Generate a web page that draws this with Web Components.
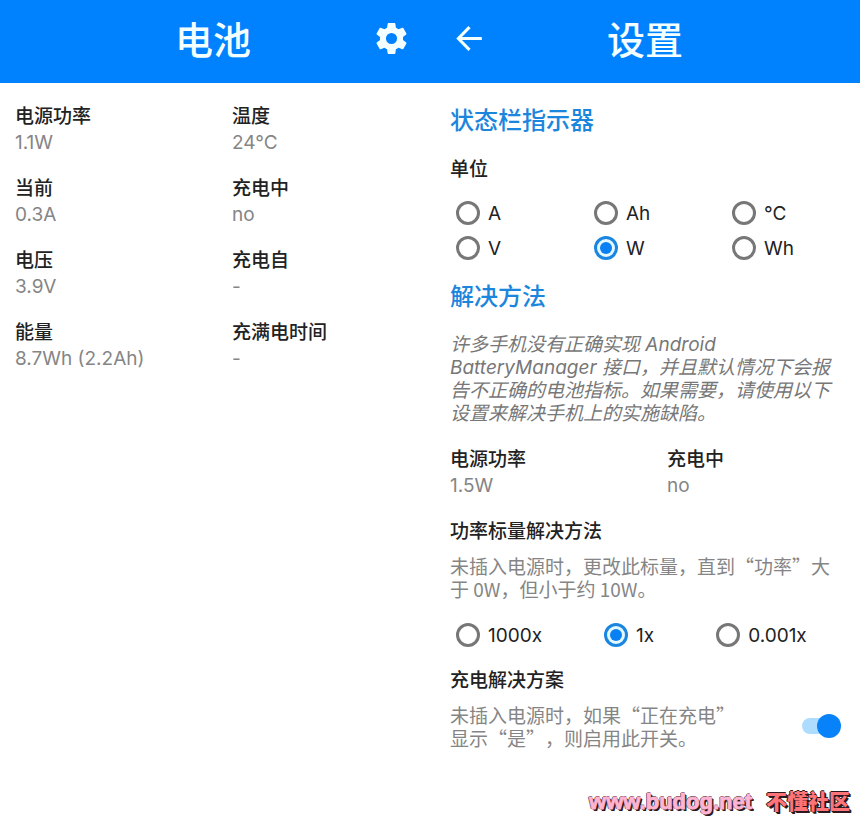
<!DOCTYPE html>
<html lang="zh-CN">
<head>
<meta charset="utf-8">
<meta name="viewport" content="width=device-width, initial-scale=1">
<title>电池</title>
<style>
  body {
    margin: 0;
    min-height: 100vh;
    background: #fff;
    color: #222;
    font-family: Inter, "Noto Sans CJK SC", sans-serif;
    font-size: 19px;
    line-height: 26px;
  }
</style>
</head>
<body>
<battery-app></battery-app>

<script>
class AppHeader extends HTMLElement {
  constructor() {
    super();
    this.attachShadow({ mode: 'open' });
    this.shadowRoot.innerHTML = `
      <style>
        :host { display: block; background: #0082ff; color: #f4ffff; }
        header {
          display: grid;
          grid-template-columns: var(--lead, 48px) 1fr 48px;
          align-items: center;
          box-sizing: border-box;
          height: 83px;
          padding: 0 15px 4px;
        }
        h1 {
          grid-column: 2;
          margin: 0;
          font-size: 38px;
          font-weight: 500;
          line-height: 48px;
          text-align: center;
        }
        ::slotted([slot=end]) { grid-column: 3; }
      </style>
      <header>
        <slot name="start"></slot>
        <h1><slot></slot></h1>
        <slot name="end"></slot>
      </header>
    `;
  }
}
customElements.define('app-header', AppHeader);

const ICONS = {
  gear: '<path fill="currentColor" d="M19.43 12.98c.04-.32.07-.64.07-.98s-.03-.66-.07-.98l2.11-1.65c.19-.15.24-.42.12-.64l-2-3.46c-.12-.22-.39-.3-.61-.22l-2.49 1c-.52-.4-1.08-.73-1.69-.98l-.38-2.65C14.46 2.18 14.25 2 14 2h-4c-.25 0-.46.18-.49.42l-.38 2.65c-.61.25-1.17.59-1.69.98l-2.49-1c-.23-.09-.49 0-.61.22l-2 3.46c-.13.22-.07.49.12.64l2.11 1.65c-.04.32-.07.65-.07.98s.03.66.07.98l-2.11 1.65c-.19.15-.24.42-.12.64l2 3.46c.12.22.39.3.61.22l2.49-1c.52.4 1.08.73 1.69.98l.38 2.65c.03.24.24.42.49.42h4c.25 0 .46-.18.49-.42l.38-2.65c.61-.25 1.17-.59 1.69-.98l2.49 1c.23.09.49 0 .61-.22l2-3.46c.12-.22.07-.49-.12-.64l-2.11-1.65zM12 15.6A3.6 3.6 0 1 1 12 8.4a3.6 3.6 0 0 1 0 7.2z"/>',
  back: '<path fill="none" stroke="currentColor" stroke-width="2" d="M20 12H5.2M12 4.6 4.8 12l7.2 7.4"/>'
};

class IconButton extends HTMLElement {
  connectedCallback() {
    if (this.shadowRoot) return;
    this.attachShadow({ mode: 'open' });
    this.shadowRoot.innerHTML = `
      <style>
        :host { display: block; }
        button {
          display: flex;
          align-items: center;
          justify-content: center;
          width: 48px;
          height: 48px;
          padding: 0 0 2px;
          border: 0;
          background: none;
          color: inherit;
          cursor: pointer;
        }
        svg { width: 37px; height: 37px; }
      </style>
      <button type="button" aria-label="${this.getAttribute('label')}">
        <svg viewBox="0 0 24 24" aria-hidden="true">${ICONS[this.getAttribute('icon')]}</svg>
      </button>
    `;
  }
}
customElements.define('icon-button', IconButton);

class StatItem extends HTMLElement {
  connectedCallback() {
    if (this.shadowRoot) return;
    this.attachShadow({ mode: 'open' });
    this.shadowRoot.innerHTML = `
      <style>
        :host { display: block; }
        .label { font-weight: 500; }
        .value { color: #858585; }
      </style>
      <div class="label">${this.getAttribute('label')}</div>
      <div class="value"><slot></slot></div>
    `;
  }
}
customElements.define('stat-item', StatItem);

class StatGrid extends HTMLElement {
  constructor() {
    super();
    this.attachShadow({ mode: 'open' });
    this.shadowRoot.innerHTML = `
      <style>
        :host {
          display: grid;
          grid-template-columns: 1fr 1fr;
          gap: 20px 34px;
        }
      </style>
      <slot></slot>
    `;
  }
}
customElements.define('stat-grid', StatGrid);

// radios share one shadow root so the browser groups them by name
class RadioGroup extends HTMLElement {
  connectedCallback() {
    if (this.shadowRoot) return;
    const name = this.getAttribute('name');
    const value = this.getAttribute('value');
    const options = this.getAttribute('options').split(',');
    this.attachShadow({ mode: 'open' });
    this.shadowRoot.innerHTML = `
      <style>
        :host { display: block; padding-left: 6px; }
        .group {
          display: grid;
          grid-template-columns: repeat(3, 1fr);
          column-gap: 26px;
        }
        :host([inline]) .group { display: flex; column-gap: 62px; }
        label {
          display: flex;
          align-items: center;
          gap: 8px;
          height: 35px;
          cursor: pointer;
        }
        span { padding-top: 2px; }
        input {
          appearance: none;
          display: grid;
          place-content: center;
          flex: none;
          width: 24px;
          height: 24px;
          margin: 0;
          border: 3px solid #777;
          border-radius: 50%;
        }
        input:checked { border-color: #1b86e0; background: #e4f8ff; }
        input:checked::before {
          content: '';
          width: 12px;
          height: 12px;
          border-radius: 50%;
          background: #0a80f5;
        }
      </style>
      <div class="group" role="radiogroup" aria-label="${this.getAttribute('label')}">
        ${options.map((opt) => `
          <label><input type="radio" name="${name}" value="${opt}" ${opt === value ? 'checked' : ''}><span>${opt}</span></label>
        `).join('')}
      </div>
    `;
  }
}
customElements.define('radio-group', RadioGroup);

class SwitchRow extends HTMLElement {
  constructor() {
    super();
    this.attachShadow({ mode: 'open' });
    this.shadowRoot.innerHTML = `
      <style>
        :host { display: block; }
        label {
          display: flex;
          align-items: center;
          justify-content: space-between;
          gap: 60px;
          padding-right: 3px;
          cursor: pointer;
        }
        input {
          appearance: none;
          display: grid;
          align-items: center;
          flex: none;
          width: 39px;
          height: 24px;
          margin: 0;
        }
        input::before, input::after { content: ''; grid-area: 1 / 1; }
        input::before {
          height: 16px;
          margin-right: 4px;
          border-radius: 8px;
          background: #ccc;
        }
        input::after {
          width: 24px;
          height: 24px;
          border-radius: 50%;
          background: #f5f5f5;
        }
        input:checked::before { background: #aedcff; }
        input:checked::after { justify-self: end; background: #0882f8; }
      </style>
      <label><slot></slot><input type="checkbox" role="switch" checked></label>
    `;
  }
}
customElements.define('switch-row', SwitchRow);

class SiteMark extends HTMLElement {
  constructor() {
    super();
    this.attachShadow({ mode: 'open' });
    this.shadowRoot.innerHTML = `
      <style>
        :host {
          --ink: #2a1a20;
          position: absolute;
          right: 10px;
          bottom: 6px;
          display: flex;
          gap: 14px;
          font: bold 22px/28px "Liberation Sans", "Noto Sans CJK SC", sans-serif;
          color: #ffb4d2;
          text-shadow: -1px 0 var(--ink), 0 -1px var(--ink), 1px 1px var(--ink), 2px 2px var(--ink);
        }
        span { -webkit-text-stroke: 1px currentColor; }
        b { font-size: 21px; font-weight: 900; color: #ff7478; }
      </style>
      <span>www.budog.net</span>
      <b>不懂社区</b>
    `;
  }
}
customElements.define('site-mark', SiteMark);

class BatteryApp extends HTMLElement {
  constructor() {
    super();
    this.attachShadow({ mode: 'open' });
    this.shadowRoot.innerHTML = `
      <style>
        :host {
          display: grid;
          grid-template-columns: 1fr 1fr;
          position: relative;
          min-height: 100vh;
        }
        main { padding: 21px 15px; }
        .settings { padding: 22px 16px 22px 20px; }
        .status app-header { --lead: 44px; }
        h2 {
          margin: 16px 0 20px;
          color: #1b86dc;
          font-size: 24px;
          font-weight: 500;
          line-height: 32px;
        }
        h2:first-child { margin-top: 0; }
        h3 { margin: 0 0 9px; font-size: 19px; font-weight: 500; line-height: 26px; }
        /* the CJK face comes first for its full-width quotation marks */
        p {
          margin: 0;
          color: #858585;
          font-family: "Noto Sans CJK SC", sans-serif;
          line-height: 23px;
          text-spacing-trim: space-all;
        }
        .note { color: #777; font-family: inherit; font-style: italic; }
        radio-group { margin: 12px 0 16px; }
        radio-group[inline] { margin-top: 17px; }
        .settings stat-grid { margin: 22px 0 20px; gap: 20px; grid-template-columns: 197px 1fr; }
      </style>
      <section class="status">
        <app-header>电池<icon-button slot="end" icon="gear" label="设置"></icon-button></app-header>
        <main>
          <stat-grid>
            <stat-item label="电源功率">1.1W</stat-item>
            <stat-item label="温度">24°C</stat-item>
            <stat-item label="当前">0.3A</stat-item>
            <stat-item label="充电中">no</stat-item>
            <stat-item label="电压">3.9V</stat-item>
            <stat-item label="充电自">-</stat-item>
            <stat-item label="能量">8.7Wh (2.2Ah)</stat-item>
            <stat-item label="充满电时间">-</stat-item>
          </stat-grid>
        </main>
      </section>
      <section>
        <app-header><icon-button slot="start" icon="back" label="返回"></icon-button>设置</app-header>
        <main class="settings">
          <h2>状态栏指示器</h2>
          <h3>单位</h3>
          <radio-group name="unit" label="单位" options="A,Ah,°C,V,W,Wh" value="W"></radio-group>
          <h2>解决方法</h2>
          <p class="note">许多手机没有正确实现 Android BatteryManager 接口，并且默认情况下会报告不正确的电池指标。如果需要，请使用以下设置来解决手机上的实施缺陷。</p>
          <stat-grid>
            <stat-item label="电源功率">1.5W</stat-item>
            <stat-item label="充电中">no</stat-item>
          </stat-grid>
          <h3>功率标量解决方法</h3>
          <p>未插入电源时，更改此标量，直到“功率”大于 0W，但小于约 10W。</p>
          <radio-group inline name="scale" label="功率标量解决方法" options="1000x,1x,0.001x" value="1x"></radio-group>
          <h3>充电解决方案</h3>
          <switch-row><p>未插入电源时，如果“正在充电”显示“是”，则启用此开关。</p></switch-row>
        </main>
      </section>
      <site-mark></site-mark>
    `;
  }
}
customElements.define('battery-app', BatteryApp);
</script>
</body>
</html>
